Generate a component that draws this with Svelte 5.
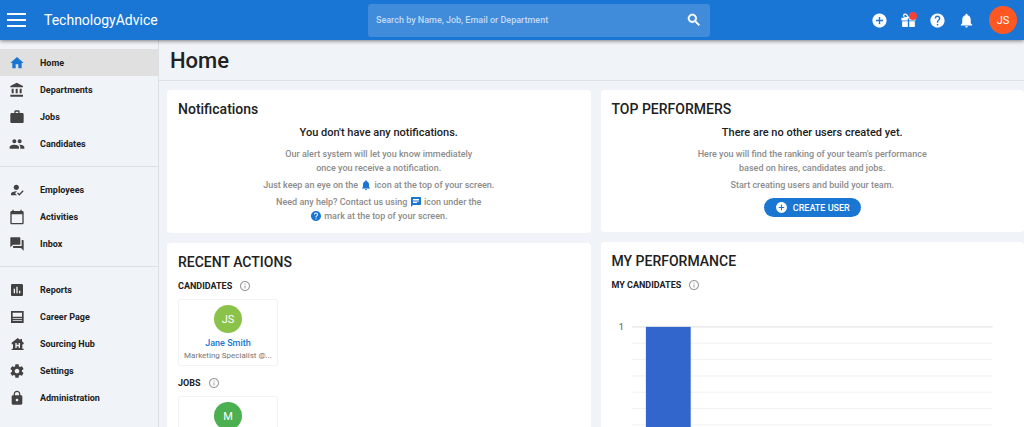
<script lang="ts">
	type NavItem = { label: string; icon: string; active?: boolean };

	const icons: Record<string, string> = {
		home: 'M10 20v-6h4v6h5v-8h3L12 3 2 12h3v8z',
		bank: 'M4 10v7h3v-7H4zm6 0v7h3v-7h-3zM2 22h19v-3H2v3zm14-12v7h3v-7h-3zM11.500 1L2 6v2h19V6z',
		work: 'M20 6h-4V4c0-1.110-.890-2-2-2h-4c-1.110 0-2 .890-2 2v2H4c-1.110 0-1.990.890-1.990 2L2 19c0 1.110.890 2 2 2h16c1.110 0 2-.890 2-2V8c0-1.110-.890-2-2-2zm-6 0h-4V4h4v2z',
		people:
			'M16 11c1.660 0 2.990-1.340 2.990-3S17.660 5 16 5s-3 1.340-3 3 1.340 3 3 3zm-8 0c1.660 0 2.990-1.340 2.990-3S9.660 5 8 5 5 6.340 5 8s1.340 3 3 3zm0 2c-2.330 0-7 1.170-7 3.500V19h14v-2.500c0-2.330-4.670-3.500-7-3.500zm8 0c-.290 0-.620.020-.970.050 1.160.840 1.970 1.970 1.970 3.450V19h6v-2.500c0-2.330-4.670-3.500-7-3.500z',
		employee:
			'M9 17l3-2.940c-.390-.040-.680-.060-1-.060-2.670 0-8 1.340-8 4v2h9l-3-3zm2-5c2.210 0 4-1.790 4-4s-1.790-4-4-4-4 1.790-4 4 1.790 4 4 4zm4.470 8.500L12 17l1.400-1.410 2.070 2.080 5.130-5.170 1.400 1.410z',
		calendar:
			'M20 3h-1V1h-2v2H7V1H5v2H4c-1.100 0-2 .900-2 2v16c0 1.100.900 2 2 2h16c1.100 0 2-.900 2-2V5c0-1.100-.900-2-2-2zm0 18H4V8h16v13z',
		forum:
			'M21 6h-2v9H6v2c0 .550.450 1 1 1h11l4 4V7c0-.550-.450-1-1-1zm-4 6V3c0-.550-.450-1-1-1H3c-.550 0-1 .450-1 1v14l4-4h10c.550 0 1-.450 1-1z',
		reports:
			'M19 3H5c-1.100 0-2 .900-2 2v14c0 1.100.900 2 2 2h14c1.100 0 2-.900 2-2V5c0-1.100-.900-2-2-2zM9 17H7v-7h2v7zm4 0h-2V7h2v10zm4 0h-2v-4h2v4z',
		page: 'M3 3h19v18H3V3zm2.500 2.500v6h14v-6h-14zm0 8.500v1h14v-1h-14zm0 2.500v1h14v-1h-14z',
		hub: 'M13 3l4 3V4.500h2.500V8L22 10v2.500h-2V19h2v2H4v-2h2v-6.500H4V10zM9.500 10.500V18h2v-2.500h3V18h2v-7.500h-2v2.500h-3v-2.500z',
		settings:
			'M19.430 12.980c.040-.320.070-.640.070-.980s-.030-.660-.070-.980l2.110-1.650c.190-.150.240-.420.120-.640l-2-3.460c-.120-.220-.390-.300-.610-.220l-2.490 1c-.520-.400-1.080-.730-1.690-.980l-.380-2.650C14.460 2.180 14.250 2 14 2h-4c-.250 0-.460.180-.490.420l-.380 2.650c-.610.250-1.170.590-1.690.980l-2.490-1c-.230-.090-.490 0-.610.220l-2 3.460c-.130.220-.070.490.120.640l2.110 1.650c-.040.320-.070.650-.070.980s.030.660.070.980l-2.110 1.650c-.190.150-.240.420-.120.640l2 3.460c.120.220.390.300.610.220l2.490-1c.520.400 1.080.730 1.690.980l.380 2.650c.030.240.240.420.490.420h4c.250 0 .460-.180.490-.420l.380-2.650c.610-.250 1.170-.590 1.690-.980l2.490 1c.230.090.490 0 .610-.220l2-3.460c.120-.220.070-.490-.120-.640l-2.110-1.650zM12 15.500c-1.930 0-3.500-1.570-3.500-3.500s1.570-3.500 3.500-3.500 3.500 1.570 3.500 3.500-1.570 3.500-3.500 3.500z',
		lock: 'M18 8h-1V6c0-2.760-2.240-5-5-5S7 3.240 7 6v2H6c-1.100 0-2 .900-2 2v10c0 1.100.900 2 2 2h12c1.100 0 2-.900 2-2V10c0-1.100-.900-2-2-2zm-6 9c-1.100 0-2-.900-2-2s.900-2 2-2 2 .900 2 2-.900 2-2 2zm3.100-9H8.900V6c0-1.710 1.390-3.100 3.100-3.100 1.710 0 3.100 1.390 3.100 3.100v2z',
		search:
			'M15.500 14h-.790l-.280-.270C15.410 12.590 16 11.110 16 9.500 16 5.910 13.090 3 9.500 3S3 5.910 3 9.500 5.910 16 9.500 16c1.610 0 3.090-.590 4.230-1.570l.270.280v.790l5 4.990L20.490 19l-4.990-5zm-6 0C7.010 14 5 11.990 5 9.500S7.010 5 9.500 5 14 7.010 14 9.500 11.990 14 9.500 14z',
		add: 'M12 2C6.480 2 2 6.480 2 12s4.480 10 10 10 10-4.480 10-10S17.520 2 12 2zm5 11h-4v4h-2v-4H7v-2h4V7h2v4h4v2z',
		gift: 'M2 8h20v4h-9V9h-2v3H2V8zm1 5h8v8H4c-.600 0-1-.400-1-1v-7zm10 0h8v7c0 .600-.400 1-1 1h-7v-8zM12 7C11 4 9.500 2 7.500 2A3 3 0 0 0 5 7l2 1h10l2-1a3 3 0 0 0-2.500-5C14.500 2 13 4 12 7zM7.500 4C8.500 4 9.500 5.500 10 7H7.500a1.500 1.500 0 0 1 0-3z',
		help: 'M12 2C6.480 2 2 6.480 2 12s4.480 10 10 10 10-4.480 10-10S17.520 2 12 2zm1 17h-2v-2h2v2zm2.070-7.750l-.900.920C13.450 12.900 13 13.500 13 15h-2v-.500c0-1.100.450-2.100 1.170-2.830l1.240-1.260c.370-.360.590-.860.590-1.410 0-1.100-.900-2-2-2s-2 .900-2 2H8c0-2.210 1.790-4 4-4s4 1.790 4 4c0 .880-.360 1.680-.930 2.250z',
		bell: 'M12 22c1.100 0 2-.900 2-2h-4c0 1.100.890 2 2 2zm6-6v-5c0-3.070-1.640-5.640-4.500-6.320V4c0-.830-.670-1.500-1.500-1.500s-1.500.670-1.500 1.500v.680C7.630 5.360 6 7.920 6 11v5l-2 2v1h16v-1l-2-2z',
		chat: 'M20 2H4c-1.100 0-1.990.900-1.990 2L2 22l4-4h14c1.100 0 2-.900 2-2V4c0-1.100-.900-2-2-2zM6 9h12v2H6V9zm8 5H6v-2h8v2zm4-6H6V6h12v2z',
		info: 'M11 17h2v-6h-2v6zm1-15C6.480 2 2 6.480 2 12s4.480 10 10 10 10-4.480 10-10S17.520 2 12 2zm0 18c-4.410 0-8-3.590-8-8s3.590-8 8-8 8 3.590 8 8-3.590 8-8 8zM11 9h2V7h-2v2z'
	};

	const groups: NavItem[][] = [
		[
			{ label: 'Home', icon: 'home', active: true },
			{ label: 'Departments', icon: 'bank' },
			{ label: 'Jobs', icon: 'work' },
			{ label: 'Candidates', icon: 'people' }
		],
		[
			{ label: 'Employees', icon: 'employee' },
			{ label: 'Activities', icon: 'calendar' },
			{ label: 'Inbox', icon: 'forum' }
		],
		[
			{ label: 'Reports', icon: 'reports' },
			{ label: 'Career Page', icon: 'page' },
			{ label: 'Sourcing Hub', icon: 'hub' },
			{ label: 'Settings', icon: 'settings' },
			{ label: 'Administration', icon: 'lock' }
		]
	];

	const plot = { top: 29, height: 164, left: 20, right: 382 };
	const gridLines = Array.from({ length: 11 }, (_, i) => plot.top + (i * plot.height) / 10);
	let query = $state('');
</script>

{#snippet icon(name: string)}
	<svg class="icon" viewBox="0 0 24 24" aria-hidden="true">
		<path d={icons[name]} fill="currentColor" fill-rule="evenodd" />
	</svg>
{/snippet}

<div class="app">
	<header class="topbar">
		<div class="brand">
			<button class="menu" aria-label="Toggle menu"><span></span><span></span><span></span></button>
			<a href="#home">TechnologyAdvice</a>
		</div>
		<form class="search" role="search">
			<input
				type="search"
				aria-label="Search"
				placeholder="Search by Name, Job, Email or Department"
				bind:value={query}
			/>
			<button aria-label="Submit search">{@render icon('search')}</button>
		</form>
		<div class="tools">
			<button aria-label="Add">{@render icon('add')}</button>
			<button class="gift" aria-label="What's new">{@render icon('gift')}<span class="dot"></span></button>
			<button aria-label="Help">{@render icon('help')}</button>
			<button aria-label="Notifications">{@render icon('bell')}</button>
			<button class="avatar user" aria-label="Account">JS</button>
		</div>
	</header>

	<div class="body">
		<nav class="sidebar">
			{#each groups as group}
				<ul>
					{#each group as item}
						<li>
							<a href="#{item.icon}" class:active={item.active}>
								{@render icon(item.icon)}
								{item.label}
							</a>
						</li>
					{/each}
				</ul>
			{/each}
		</nav>

		<main>
			<h1>Home</h1>
			<div class="columns">
				<div class="column">
					<section class="card notice">
						<h2>Notifications</h2>
						<h3>You don't have any notifications.</h3>
						<p>Our alert system will let you know immediately<br />once you receive a notification.</p>
						<p>Just keep an eye on the {@render icon('bell')} icon at the top of your screen.</p>
						<p>
							Need any help? Contact us using {@render icon('chat')} icon under the<br />
							{@render icon('help')} mark at the top of your screen.
						</p>
					</section>

					<section class="card">
						<h2>RECENT ACTIONS</h2>
						<h4>CANDIDATES {@render icon('info')}</h4>
						<div class="tile">
							<span class="avatar lime">JS</span>
							<a href="#jane-smith">Jane Smith</a>
							<small>Marketing Specialist @...</small>
						</div>
						<h4>JOBS {@render icon('info')}</h4>
						<div class="tile">
							<span class="avatar green">M</span>
						</div>
					</section>
				</div>

				<div class="column">
					<section class="card notice">
						<h2>TOP PERFORMERS</h2>
						<h3>There are no other users created yet.</h3>
						<p>
							Here you will find the ranking of your team's performance<br />based on hires, candidates
							and jobs.
						</p>
						<p>Start creating users and build your team.</p>
						<button class="create">{@render icon('add')} CREATE USER</button>
					</section>

					<section class="card">
						<h2>MY PERFORMANCE</h2>
						<h4>MY CANDIDATES {@render icon('info')}</h4>
						<svg class="chart" viewBox="0 0 403 200" role="img" aria-label="My candidates: 1">
							{#each gridLines as y, i}
								<line x1={plot.left} x2={plot.right} y1={y} y2={y} class:major={i % 10 === 0} />
							{/each}
							<rect x="34" y={plot.top} width="45" height={plot.height} />
							<text x="12" y={plot.top + 3} text-anchor="end">1</text>
						</svg>
					</section>
				</div>
			</div>
		</main>
	</div>
</div>

<style>
	:global(body) {
		background: #f0f3f8;
	}
	.app {
		display: flex;
		flex-direction: column;
		height: 100vh;
		overflow: hidden;
		font-family: Roboto, sans-serif;
		font-size: 9px;
		font-weight: 500;
		color: #212121;
	}
	a {
		color: inherit;
		text-decoration: none;
	}
	button {
		display: flex;
		align-items: center;
		justify-content: center;
		padding: 0;
		border: 0;
		background: none;
		color: inherit;
		font: inherit;
		cursor: pointer;
	}
	h1,
	h2,
	h3,
	h4,
	p,
	ul {
		margin: 0;
		padding: 0;
		font-weight: 500;
	}
	.icon {
		flex: none;
		width: 16px;
		height: 16px;
	}

	.topbar {
		position: relative;
		z-index: 1;
		flex: none;
		display: grid;
		grid-template-columns: 1fr minmax(200px, 342px) 1fr;
		align-items: center;
		height: 40px;
		background: #1976d5;
		color: #fff;
		box-shadow: 0 1px 4px rgba(0, 0, 0, 0.5);
	}
	.brand {
		display: flex;
		align-items: center;
		gap: 18px;
		padding-left: 7px;
		font-size: 14px;
		font-weight: 400;
	}
	.menu {
		flex-direction: column;
		gap: 4px;
	}
	.menu span {
		width: 19px;
		height: 2px;
		background: #fff;
	}
	.search {
		display: flex;
		align-items: center;
		height: 33px;
		padding: 0 8px;
		border-radius: 3px;
		background: #408cdb;
		margin-left: 27px;
		margin-right: -27px;
	}
	.search input {
		flex: 1;
		min-width: 0;
		padding: 0;
		border: 0;
		outline: 0;
		background: none;
		color: #fff;
		font: inherit;
	}
	.search input::placeholder {
		color: #c3dbf4;
	}
	.search .icon {
		stroke: currentColor;
	}
	.tools {
		display: flex;
		align-items: center;
		justify-content: flex-end;
		gap: 12px;
		padding-right: 7px;
	}
	.tools .icon {
		width: 17px;
		height: 17px;
	}
	.gift {
		position: relative;
	}
	.dot {
		position: absolute;
		top: 0;
		right: 0;
		width: 8px;
		height: 8px;
		border-radius: 50%;
		background: #f44336;
	}
	.avatar {
		display: flex;
		align-items: center;
		justify-content: center;
		width: 28px;
		height: 28px;
		border-radius: 50%;
		color: #fff;
		font-size: 11px;
		font-weight: 400;
	}
	.user {
		margin-left: 2px;
		background: #ff5722;
	}
	.lime {
		background: #8bc34a;
	}
	.green {
		background: #4caf50;
	}

	.body {
		display: flex;
		flex: 1;
		min-height: 0;
	}
	.sidebar {
		flex: none;
		width: 158px;
		border-right: 1px solid #dcdfe3;
		font-weight: 700;
	}
	.sidebar ul {
		padding: 9px 0;
		font-weight: inherit;
		list-style: none;
	}
	.sidebar ul + ul {
		border-top: 1px solid #dcdfe3;
	}
	.sidebar a {
		display: flex;
		align-items: center;
		gap: 15px;
		height: 27px;
		padding-left: 9px;
	}
	.sidebar .icon {
		color: #424242;
	}
	.sidebar .active {
		background: #e0e0e0;
	}
	.sidebar .active .icon {
		color: #1976d2;
	}

	main {
		flex: 1;
		min-width: 0;
	}
	h1 {
		padding: 2px 11px 0;
		border-bottom: 1px solid #dfe1e4;
		font-size: 22px;
		line-height: 38px;
	}
	.columns {
		display: grid;
		grid-template-columns: 1fr 1fr;
		gap: 10px;
		padding: 9px 0 0 8px;
	}
	.column {
		display: flex;
		flex-direction: column;
		gap: 10px;
		min-width: 0;
	}
	.card {
		padding: 10px 11px;
		border-radius: 4px;
		background: #fff;
	}
	h2 {
		font-size: 14px;
		line-height: 18px;
	}
	.notice {
		display: flex;
		flex-direction: column;
		align-items: center;
		text-align: center;
		color: #8c8c8c;
	}
	.notice h2 {
		align-self: flex-start;
		color: #212121;
	}
	h3 {
		margin: 6px 0 5px;
		color: #212121;
		font-size: 11px;
		line-height: 18px;
	}
	p {
		margin-bottom: 3px;
		line-height: 14px;
	}
	p:last-child {
		margin-bottom: 0;
	}
	.notice p .icon {
		width: 12px;
		height: 12px;
		color: #1976d2;
		vertical-align: -3px;
	}
	.create {
		gap: 5px;
		height: 19px;
		margin: 3px 0 5px;
		padding: 0 11px;
		border-radius: 10px;
		background: #1976d2;
		color: #fff;
	}
	.create .icon {
		width: 13px;
		height: 13px;
	}
	h4 {
		display: flex;
		align-items: center;
		gap: 7px;
		padding: 9px 0 7px;
		font-size: 9px;
		font-weight: 700;
		line-height: 12px;
	}
	h4 .icon {
		width: 12px;
		height: 12px;
		color: #999;
	}
	.tile {
		display: flex;
		flex-direction: column;
		align-items: center;
		width: 90px;
		margin-bottom: 2px;
		padding: 5px 4px 3px;
		border: 1px solid #f3f3f3;
		border-radius: 2px;
	}
	.tile a {
		margin-top: 3px;
		color: #1976d2;
		line-height: 14px;
	}
	.tile small {
		color: #757575;
		font-size: 8px;
		font-weight: 400;
		line-height: 12px;
		white-space: nowrap;
	}
	.chart {
		display: block;
		width: 100%;
	}
	.chart line {
		stroke: #f1f1f1;
	}
	.chart .major {
		stroke: #dcdcdc;
	}
	.chart rect {
		fill: #3366cc;
	}
	.chart text {
		fill: #777;
		font-size: 9px;
	}
</style>
